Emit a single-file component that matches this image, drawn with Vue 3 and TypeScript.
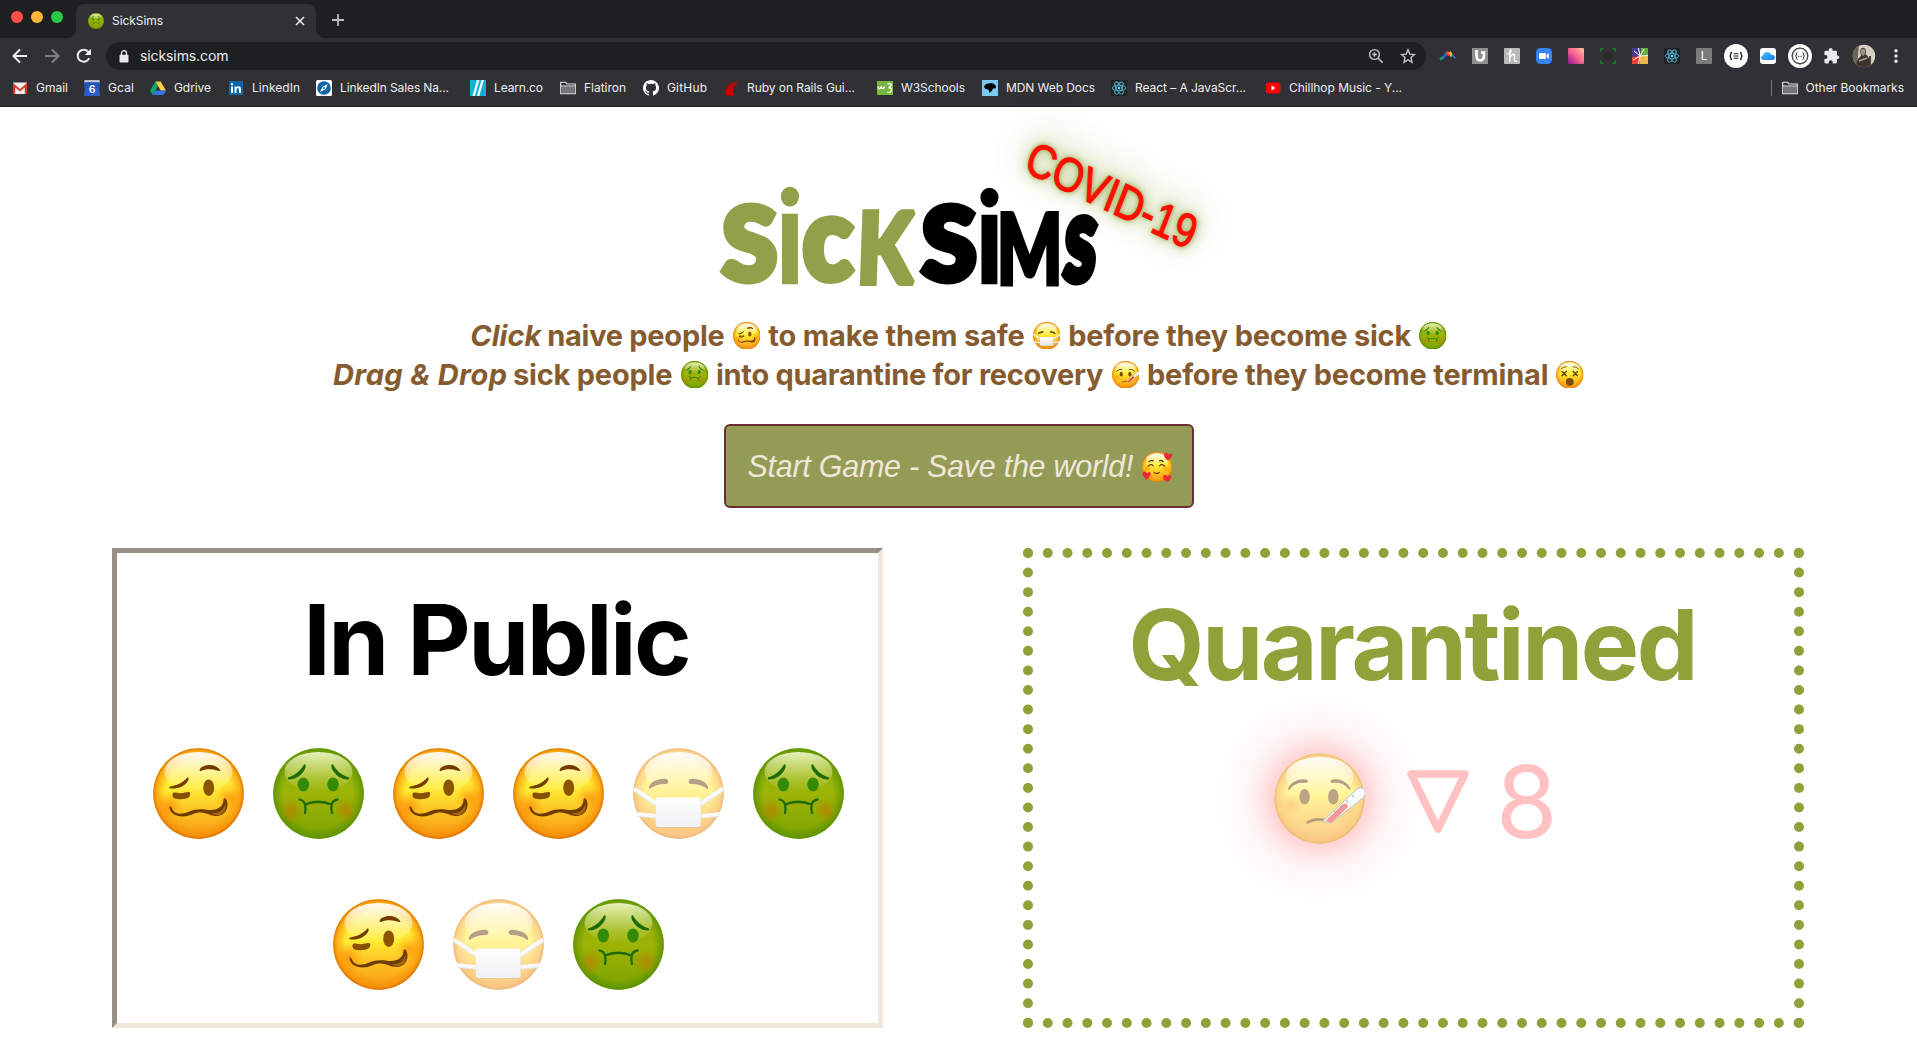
<script setup lang="ts">
import type { Directive } from 'vue'

type Face = 'woozy' | 'sick' | 'mask' | 'fever' | 'dizzy' | 'love'

// Tracks a line of text out (or in) until it is exactly `value` pixels wide.
const vFit: Directive<HTMLElement, number> = {
  mounted(el, { value }) {
    const count = (el.textContent ?? '').length
    const spacing = (value - el.getBoundingClientRect().width) / (count - 1)
    el.style.letterSpacing = `${spacing}px`
    el.style.marginRight = `${-spacing}px`
  },
}

const bookmarks = [
  { icon: 'gmail', label: 'Gmail', text: 32, width: 72 },
  { icon: 'gcal', label: 'Gcal', text: 26, width: 66 },
  { icon: 'gdrive', label: 'Gdrive', text: 37, width: 78 },
  { icon: 'linkedin', label: 'LinkedIn', text: 48, width: 88 },
  { icon: 'sales', label: 'LinkedIn Sales Na...', text: 109, width: 154 },
  { icon: 'learn', label: 'Learn.co', text: 49, width: 90 },
  { icon: 'folder', label: 'Flatiron', text: 42, width: 83 },
  { icon: 'github', label: 'GitHub', text: 40, width: 80 },
  { icon: 'rails', label: 'Ruby on Rails Gui...', text: 108, width: 154 },
  { icon: 'w3', label: 'W3Schools', text: 64, width: 105 },
  { icon: 'mdn', label: 'MDN Web Docs', text: 89, width: 129 },
  { icon: 'react', label: 'React – A JavaScr...', text: 111, width: 154 },
  { icon: 'youtube', label: 'Chillhop Music - Y...', text: 113, width: 140 },
]

const extensions = ['arc', 'ublock', 'honey', 'zoom', 'pixel', 'corners', 'burst', 'react', 'letter', 'json', 'cloud', 'swagger', 'puzzle', 'avatar', 'dots']

interface Part { text?: string; width?: number; em?: boolean; face?: Face }
const instructions: Part[][] = [
  [
    { text: 'Click', width: 71, em: true },
    { text: 'naive people', width: 177.5 },
    { face: 'woozy' },
    { text: 'to make them safe', width: 256.5 },
    { face: 'mask' },
    { text: 'before they become sick', width: 343 },
    { face: 'sick' },
  ],
  [
    { text: 'Drag & Drop', width: 174, em: true },
    { text: 'sick people', width: 159.5 },
    { face: 'sick' },
    { text: 'into quarantine for recovery', width: 387.5 },
    { face: 'fever' },
    { text: 'before they become terminal', width: 401.5 },
    { face: 'dizzy' },
  ],
]

const people: Face[] = ['woozy', 'sick', 'woozy', 'woozy', 'mask', 'sick', 'woozy', 'mask', 'sick']

// Wordmark letters: each one, outline included, is stretched to its own box.
const ctx = document.createElement('canvas').getContext('2d')!
const letters = [
  { ch: 'S', x: 719, y: 202.5, w: 58, h: 82, green: true, skew: 0, stroke: 7 },
  { ch: 'i', x: 779.5, y: 186, w: 19.5, h: 98, green: true, skew: 0, stroke: 2 },
  { ch: 'c', x: 802, y: 216, w: 53, h: 68.5, green: true, skew: 0, stroke: 7 },
  { ch: 'K', x: 859, y: 209, w: 56, h: 77, green: true, skew: -2, stroke: 6 },
  { ch: 'S', x: 918.5, y: 202.5, w: 58, h: 82, green: false, skew: 0, stroke: 7 },
  { ch: 'i', x: 979, y: 186.5, w: 19.5, h: 97.5, green: false, skew: 0, stroke: 2 },
  { ch: 'M', x: 999.5, y: 210.5, w: 59, h: 76, green: false, skew: 0, stroke: 5 },
  { ch: 's', x: 1060.5, y: 214.5, w: 34, h: 71.5, green: false, skew: -4, stroke: 6 },
].map((l) => {
  const font = l.ch === 'i' ? '600 100px Inter' : '900 100px Lato'
  ctx.font = font
  const m = ctx.measureText(l.ch)
  const half = l.stroke / 2
  const sx = l.w / (m.actualBoundingBoxLeft + m.actualBoundingBoxRight + l.stroke)
  const sy = l.h / (m.actualBoundingBoxAscent + m.actualBoundingBoxDescent + l.stroke)
  const tx = l.x + (m.actualBoundingBoxLeft + half) * sx
  const ty = l.y + (m.actualBoundingBoxAscent + half) * sy
  return { ...l, transform: `translate(${tx} ${ty}) skewX(${l.skew}) scale(${sx} ${sy})` }
})
</script>

<template>
  <div class="screen">
    <svg class="defs" width="0" height="0">
      <defs>
        <linearGradient id="gy" x1="0" y1="0" x2="0" y2="1">
          <stop offset="0" stop-color="#ffe53a" /><stop offset=".45" stop-color="#ffed35" /><stop offset=".72" stop-color="#fdbd21" /><stop offset="1" stop-color="#f59a12" />
        </linearGradient>
        <radialGradient id="rim" cx=".5" cy=".5" r=".5">
          <stop offset=".72" stop-color="#f79000" stop-opacity="0" /><stop offset=".93" stop-color="#f88a04" stop-opacity=".65" /><stop offset="1" stop-color="#d46a00" stop-opacity=".9" />
        </radialGradient>
        <linearGradient id="gg" x1="0" y1="0" x2="0" y2="1">
          <stop offset="0" stop-color="#8db010" /><stop offset=".5" stop-color="#9db306" /><stop offset="1" stop-color="#7ca400" />
        </linearGradient>
        <radialGradient id="rimg" cx=".5" cy=".5" r=".5">
          <stop offset=".76" stop-color="#5c9200" stop-opacity="0" /><stop offset="1" stop-color="#4f8c00" stop-opacity=".75" />
        </radialGradient>
        <linearGradient id="shine" x1="0" y1="0" x2="0" y2="1">
          <stop offset="0" stop-color="#fff" stop-opacity=".95" /><stop offset="1" stop-color="#fff" stop-opacity="0" />
        </linearGradient>
        <linearGradient id="shineg" x1="0" y1="0" x2="0" y2="1">
          <stop offset="0" stop-color="#f3fbd0" stop-opacity=".9" /><stop offset="1" stop-color="#dbe88a" stop-opacity="0" />
        </linearGradient>
        <radialGradient id="blush"><stop offset="0" stop-color="#ff7a00" stop-opacity=".6" /><stop offset="1" stop-color="#ff8a00" stop-opacity="0" /></radialGradient>
        <radialGradient id="blushg"><stop offset="0" stop-color="#c87400" stop-opacity=".65" /><stop offset="1" stop-color="#b88600" stop-opacity="0" /></radialGradient>
        <linearGradient id="pix" x1="1" y1="0" x2="0" y2="1"><stop offset="0" stop-color="#ffc39a" /><stop offset=".5" stop-color="#f7618f" /><stop offset="1" stop-color="#8a1592" /></linearGradient>
        <linearGradient id="cl" x1="0" y1="0" x2="1" y2="1"><stop offset="0" stop-color="#4cc4ff" /><stop offset="1" stop-color="#1578f0" /></linearGradient>
        <linearGradient id="maskg" x1="0" y1="0" x2="0" y2="1"><stop offset="0" stop-color="#fff" /><stop offset="1" stop-color="#e4e4ea" /></linearGradient>
      </defs>
      <symbol id="base" viewBox="0 0 91 91">
        <circle cx="45.5" cy="45.5" r="45.3" fill="url(#gy)" />
        <circle cx="45.5" cy="45.5" r="45.3" fill="url(#rim)" />
        <ellipse cx="45.5" cy="24" rx="34" ry="20" fill="url(#shine)" />
      </symbol>
      <symbol id="woozy" viewBox="0 0 91 91">
        <use href="#base" />
        <circle cx="77" cy="50" r="15" fill="url(#blush)" /><circle cx="16" cy="58" r="14" fill="url(#blush)" />
        <path d="M46.5 21.5C50 15.500 63 15 67.500 22.500C67 25 60 18.500 48.500 22.800Q46.500 23.500 46.500 21.500Z" fill="#733c00" />
        <path d="M16.500 38.800C25 37 30 34.500 34 30C36 28.500 36 31 35 33C31.500 38.500 25 41 18 40.500Q15.500 40.500 16.500 38.800Z" fill="#733c00" />
        <path d="M19.500 46C20 44 23 44.500 27 45.200C31 45.800 35 42.800 37.200 44.800C38 49.500 34 51 28 51.300C22 51.300 19 50 19.500 46Z" fill="#855000" />
        <ellipse cx="55.700" cy="39.700" rx="5.500" ry="8.300" fill="#8a5400" />
        <path d="M16.500 59C17 57 18.500 59 19.500 61.500C22 66.500 29 66.500 35 64C42 61 47 61 54 61.800C64 63 70 59 70.500 52C71 49 74 50 74.500 56C75 66 66 70 58 67.300C50 64 46 63.500 39 66.500C28 71 16.500 67 16.500 59Z" fill="#6f3c00" />
        <path d="M58 65Q69 66.500 72.500 56Q74 64 67 67Q62 68 58 65Z" fill="#a3670d" />
      </symbol>
      <symbol id="sick" viewBox="0 0 91 91">
        <circle cx="45.500" cy="45.500" r="45.300" fill="url(#gg)" /><circle cx="45.500" cy="45.500" r="45.300" fill="url(#rimg)" />
        <ellipse cx="45.500" cy="24" rx="34" ry="20" fill="url(#shineg)" />
        <circle cx="18" cy="63" r="13" fill="url(#blushg)" /><circle cx="72.700" cy="63" r="13" fill="url(#blushg)" />
        <path d="M15 29.500C23 27 28 22 31 16.500C33 15.500 33 18 32 21C28 28 23 31 16.500 31.500Q14 31.500 15 29.500Z" fill="#1f6a06" />
        <path d="M76 29.500C68 27 63 22 60 16.500C58 15.500 58 18 59 21C63 28 68 31 74.500 31.500Q77 31.500 76 29.500Z" fill="#1f6a06" />
        <ellipse cx="30.300" cy="36.500" rx="5.700" ry="7" fill="#348a06" /><ellipse cx="60" cy="36.500" rx="5.700" ry="7" fill="#348a06" />
        <path d="M32 56.500Q45 51 58.500 56.500M26.500 51.500Q31 52.500 32 56.500Q33 61 32 65M64.500 51.500Q59.500 52.500 58.700 56.500Q57.800 61 59 65" fill="none" stroke="#1f6a06" stroke-width="2.300" stroke-linecap="round" />
      </symbol>
      <symbol id="mask" viewBox="0 0 91 91">
        <use href="#base" />
        <path d="M16 40.500C14.500 34 28 29.500 33.500 31C37 33 35 36.500 32 36C26 36 21 38 18 40Q16.500 41.500 16 40.500ZM75 40.500C76.500 34 63 29.500 57.500 31C54 33 56 36.500 59 36C65 36 70 38 73 40Q74.500 41.500 75 40.500Z" fill="#6f4210" />
        <path d="M1 41L24 56.500M90 41L67 56.500M4 66.500L24 68.500M87 66.500L67 68.500" stroke="#cfcfd6" stroke-width="4.600" />
        <path d="M1 40.500L24 56M90 40.500L67 56M4 66L24 68M87 66L67 68" stroke="#f6f6f9" stroke-width="3.600" />
        <rect x="22.700" y="50" width="45.500" height="30" rx="3" fill="#a9884e" opacity=".55" />
        <rect x="22.700" y="49.500" width="45" height="29.500" rx="2.500" fill="url(#maskg)" />
      </symbol>
      <symbol id="fever" viewBox="0 0 91 91">
        <use href="#base" />
        <circle cx="17" cy="52" r="13" fill="url(#blush)" /><circle cx="73" cy="55" r="13" fill="url(#blush)" />
        <path d="M14 35.500C18 27 28 25 33.500 27Q35 30 31 29.800C24 29 20 31 15.500 36.500Q14 37.500 14 35.500ZM76.500 35.500C72.500 27 62.500 25 57 27Q55.500 30 59.500 29.800C66.500 29 70.500 31 75 36.500Q76.500 37.500 76.500 35.500Z" fill="#6b3c05" />
        <ellipse cx="30.600" cy="43.700" rx="5.200" ry="7.800" fill="#7b4a08" /><ellipse cx="59.300" cy="43.700" rx="5.200" ry="7.800" fill="#7b4a08" />
        <path d="M33.500 69.500Q41 65 50 67" fill="none" stroke="#6b3c05" stroke-width="2.600" stroke-linecap="round" />
        <path d="M49 68L83 36Q88 33 91 37Q93 41 89 45L57 70Z" fill="#f4f6fa" stroke="#75879b" stroke-width="1" />
        <path d="M51.500 68L69 51Q73 49 74 54L57.500 69.500Z" fill="#f2302e" />
        <path d="M60 58l1.500 2M66 53l1.500 2M72 47l2 2.500M78 42l2 2.500" stroke="#44525e" stroke-width="1" />
      </symbol>
      <symbol id="dizzy" viewBox="0 0 91 91">
        <use href="#base" />
        <path d="M17 26Q24 18 34 19M74 26Q67 18 57 19" fill="none" stroke="#7a4300" stroke-width="3" stroke-linecap="round" />
        <path d="M20 35l14 14M34 35l-14 14M57 35l14 14M71 35l-14 14" stroke="#6b3a00" stroke-width="4.500" stroke-linecap="round" />
        <ellipse cx="45.500" cy="69" rx="13" ry="13" fill="#7d4a10" />
      </symbol>
      <symbol id="love" viewBox="0 0 91 91">
        <use href="#base" />
        <circle cx="16" cy="50" r="13" fill="url(#blush)" /><circle cx="72" cy="50" r="13" fill="url(#blush)" />
        <path d="M21 30Q27 23 34 27M53 27Q59 24 64 29M19 43Q26 34 34 42M53 42Q61 34 68 43" fill="none" stroke="#6b3a00" stroke-width="4" stroke-linecap="round" />
        <path d="M34 59Q44 67 55 59Q53 67 44 67Q36 67 34 59Z" fill="#6b3a00" />
        <g fill="#ee2737">
          <path d="M79 26C66 18 64 6 71 3Q77 1 80 8Q85 1 90 5Q96 12 79 26Z" />
          <path d="M14 84C0 74-2 62 6 59Q12 58 14 65Q21 57 26 63Q29 72 14 84Z" />
          <path d="M77 91C63 85 61 73 68 70Q74 68 77 75Q82 68 88 72Q93 80 77 91Z" />
        </g>
      </symbol>
      <symbol id="i-folder" viewBox="0 0 16 16"><path d="M.7 13.800V2.200H5.600L7 4H15.300V13.800Z" fill="none" stroke="#e8eaed" stroke-width="1.100" /><path d="M1.500 6.500H14.500V13H1.500Z" fill="#757679" /><path d="M1 6H15" stroke="#e8eaed" /></symbol>
      <symbol id="i-react" viewBox="0 0 16 16"><rect width="16" height="16" rx="1" fill="#202326" /><g fill="none" stroke="#4fb4d0" stroke-width=".9"><ellipse cx="8" cy="8" rx="6.800" ry="2.700" /><ellipse cx="8" cy="8" rx="6.800" ry="2.700" transform="rotate(60 8 8)" /><ellipse cx="8" cy="8" rx="6.800" ry="2.700" transform="rotate(120 8 8)" /></g><circle cx="8" cy="8" r="1.300" fill="#61dafb" /></symbol>
      <symbol id="i-gmail" viewBox="0 0 16 16"><rect x="1" y="2.500" width="14" height="11.500" rx="1" fill="#f2efee" /><path d="M1 14V3L8 9 15 3V14H12.800V7.500L8 11.500 3.200 7.500V14Z" fill="#e0352b" /></symbol>
      <symbol id="i-gcal" viewBox="0 0 16 16"><path d="M0 1.500Q0 0 1.500 0H14.500Q16 0 16 1.500V4H0Z" fill="#b8c0cc" /><path d="M0 2.500H16L15.200 8 16 16H0L.8 8Z" fill="#2a5ccc" /><path d="M0 2.500H16L15.200 8H.8Z" fill="#2350b4" /></symbol>
      <symbol id="i-gdrive" viewBox="0 0 16 16"><path d="M5.400 1.500H10.600L16 10.500H10.700Z" fill="#ffcf48" /><path d="M5.400 1.500L8 6 2.700 15 0 10.500Z" fill="#11a861" /><path d="M5.400 10.500H16L13.300 15H2.700Z" fill="#3777e3" /></symbol>
      <symbol id="i-linkedin" viewBox="0 0 16 16"><rect x="1" y="1" width="14" height="14" fill="#0a66a8" /><path d="M3 6.500H5V13H3ZM3 3.200H5V5.200H3ZM6.500 6.500H8.400V7.400Q9.200 6.300 10.600 6.300 13 6.300 13 9.200V13H11V9.600Q11 8 9.900 8 8.500 8 8.500 9.700V13H6.500Z" fill="#fff" /></symbol>
      <symbol id="i-sales" viewBox="0 0 16 16"><rect width="16" height="16" rx="1.500" fill="#fff" /><circle cx="8" cy="8" r="6.800" fill="#0c66a8" /><path d="M11.800 4L9.500 9.200 4 12 6.600 6.700Z" fill="#fff" /><circle cx="8" cy="8" r="1" fill="#0c66a8" /></symbol>
      <symbol id="i-learn" viewBox="0 0 16 16"><rect width="16" height="16" fill="#11b1d5" /><path d="M7 0H9.300L4.800 16H2.500ZM11.500 0H13.800L9.300 16H7Z" fill="#fff" /></symbol>
      <symbol id="i-github" viewBox="0 0 16 16"><path d="M8 0C3.580 0 0 3.580 0 8c0 3.540 2.290 6.530 5.470 7.590.4.070.55-.17.55-.38v-1.490c-2.010.37-2.530-.49-2.690-.94-.09-.23-.48-.94-.82-1.130-.28-.15-.68-.52-.01-.53.63-.01 1.080.58 1.230.82.720 1.210 1.870.87 2.330.66.070-.52.280-.87.510-1.070-1.780-.2-3.640-.89-3.640-3.950 0-.87.310-1.590.82-2.150-.08-.2-.36-1.020.08-2.120 0 0 .67-.21 2.200.82a7.600 7.600 0 0 1 4 0c1.530-1.040 2.200-.82 2.200-.82.440 1.100.160 1.920.080 2.120.510.560.820 1.270.820 2.150 0 3.070-1.870 3.750-3.650 3.950.290.250.540.730.540 1.480v2.190c0 .210.150.460.550.380A8 8 0 0 0 8 0Z" fill="#fff" /></symbol>
      <symbol id="i-rails" viewBox="0 0 16 16"><path d="M2.500 15.500Q2 9 6 5.500Q10 1.800 15.500 2.800Q12 4 10.800 7Q9 11 11 15.500Z" fill="#c00" /><path d="M5.500 4L4.500 3M9 2.300L8.500 1M3.200 7L1.800 6.500M2.200 10.500L.8 10.300M13 1.500V.5" stroke="#c00" /></symbol>
      <symbol id="i-w3" viewBox="0 0 16 16"><rect y="1" width="16" height="14" fill="#76b83f" /><path d="M1 6.500Q2 10.500 3.800 7.500L4.300 7Q5.300 10.500 8 6.500" fill="none" stroke="#fff" stroke-width="1.400" /><path d="M10.500 4Q14.500 2.800 14 5.500Q13.500 7.300 11.500 7.500Q15 8.200 14.300 10.500Q13.300 13.500 10.500 12" fill="none" stroke="#fff" stroke-width="1.400" /></symbol>
      <symbol id="i-mdn" viewBox="0 0 16 16"><rect width="16" height="16" fill="#7ccaf2" /><path d="M2 7Q3 3 7 3.500Q11 2 14 6L13.500 8.500H11Q10 12 7.500 13L6.500 9.500 3.500 9Z" fill="#000" /></symbol>
      <symbol id="i-youtube" viewBox="0 0 16 16"><rect x=".5" y="2.500" width="15" height="11" rx="3" fill="#f00" /><path d="M6.500 5.500L10.500 8 6.500 10.500Z" fill="#fff" /></symbol>
      <symbol id="x-arc" viewBox="0 0 24 24"><path d="M4 15.500L7.500 13.200" stroke="#27a567" stroke-width="2.600" fill="none" /><path d="M6.800 13.800L11 9" stroke="#2d5dc8" stroke-width="2.800" fill="none" /><path d="M10.500 8L13.500 11" stroke="#e84436" stroke-width="3.200" fill="none" /><path d="M13.500 8L16 12.200" stroke="#f4b42d" stroke-width="3" fill="none" /><path d="M16.200 11L19.500 14.500" stroke="#2d6fd8" stroke-width="1.800" fill="none" /></symbol>
      <symbol id="x-ublock" viewBox="0 0 24 24"><rect x="4" y="4" width="16" height="16" fill="#8f8f90" /><path d="M8.500 6V12.500Q9 16.500 12.500 16.500Q16 16 16 12V8.500H13" stroke="#fff" stroke-width="2.600" fill="none" /></symbol>
      <symbol id="x-honey" viewBox="0 0 24 24"><rect x="4" y="4" width="16" height="16" rx="1" fill="#b9b9ba" /><path d="M7.500 10Q11.500 8.500 11 6Q10 5 9.800 9V18M10 13Q13 9 14.500 11V16.500Q15 18 17 17" stroke="#fff" stroke-width="1.400" fill="none" /></symbol>
      <symbol id="x-zoom" viewBox="0 0 24 24"><rect x="4" y="4" width="16" height="16" rx="4.500" fill="#3585f7" /><rect x="7" y="9" width="7" height="6" rx="1" fill="#fff" /><path d="M14.500 11.200L17 9.200V14.800L14.500 12.800Z" fill="#fff" /></symbol>
      <symbol id="x-pixel" viewBox="0 0 24 24"><rect x="4" y="4" width="16" height="16" rx="1" fill="url(#pix)" /></symbol>
      <symbol id="x-corners" viewBox="0 0 24 24"><path d="M4 4H8L4 8ZM20 4V8L16 4ZM4 20V16L8 20ZM20 20H16L20 16Z" fill="#1d7d2c" /><rect x="8" y="8" width="8" height="8" fill="#29292b" /></symbol>
      <symbol id="x-burst" viewBox="0 0 24 24"><path d="M4 4H13L12 12 4 14Z" fill="#493a93" /><path d="M13 4H20V12H12Z" fill="#65aa3e" /><path d="M4 13L12 12V20H4Z" fill="#ec4033" /><path d="M12 12H20V20H12Z" fill="#efb74c" /><path d="M12 12L6 7M12 12L10.500 4M12 12L16 5M12 12L20 11.500M12 12L10.500 20M12 12L5 16" stroke="#fff" stroke-width="1" /></symbol>
      <symbol id="x-react" viewBox="0 0 24 24"><use href="#i-react" x="4" y="4" width="16" height="16" /></symbol>
      <symbol id="x-letter" viewBox="0 0 24 24"><rect x="4" y="4" width="16" height="16" rx="1" fill="#7b7b7c" /></symbol>
      <symbol id="x-json" viewBox="0 0 24 24"><circle cx="12" cy="12" r="12" fill="#fff" /><path d="M8 8.500Q6.700 8.500 6.700 10Q6.700 12 5.500 12Q6.700 12 6.700 14Q6.700 15.500 8 15.500M16 8.500Q17.300 8.500 17.300 10Q17.300 12 18.500 12Q17.300 12 17.300 14Q17.300 15.500 16 15.500" fill="none" stroke="#222" stroke-width="1.400" /><path d="M9.500 9.800H14.500M9.500 12H14.500M9.500 14.200H14.500" stroke="#222" stroke-width="1.100" /></symbol>
      <symbol id="x-cloud" viewBox="0 0 24 24"><rect x="4" y="4" width="16" height="16" rx="3" fill="#fff" /><path d="M7.500 16Q5 15.800 5 13.500Q5.300 11.500 7 11.300Q8 8 11.500 8Q14.500 8 15.300 10.500Q19 11 19 13.500Q18.700 16 16.500 16Z" fill="url(#cl)" /></symbol>
      <symbol id="x-swagger" viewBox="0 0 24 24"><circle cx="12" cy="12" r="12" fill="#fff" /><circle cx="12" cy="12" r="7.800" fill="none" stroke="#444" stroke-width="1.300" /><path d="M9.500 8.500Q8.500 8.500 8.500 10Q8.500 12 7.500 12Q8.500 12 8.500 14Q8.500 15.500 9.500 15.500M14.500 8.500Q15.500 8.500 15.500 10Q15.500 12 16.500 12Q15.500 12 15.500 14Q15.500 15.500 14.500 15.500" fill="none" stroke="#333" stroke-width="1" /><path d="M10 12.300H14" stroke="#333" stroke-width="1" stroke-dasharray="1 .6" /></symbol>
      <symbol id="x-puzzle" viewBox="0 0 24 24"><path d="M18 11.500h-1V8.200c0-.8-.6-1.400-1.400-1.400h-3v-1a1.900 1.900 0 0 0-3.800 0v1h-3c-.8 0-1.400.6-1.400 1.400v2.900h1.100a2 2 0 0 1 0 4H4.400v2.900c0 .8.600 1.400 1.400 1.400h2.900v-1.100a2 2 0 0 1 4 0v1.100h2.900c.8 0 1.400-.6 1.400-1.400v-2.900h1a1.900 1.900 0 0 0 0-3.600Z" fill="#e8eaed" /></symbol>
      <symbol id="x-avatar" viewBox="0 0 24 24"><clipPath id="av"><circle cx="12" cy="12" r="11.200" /></clipPath><g clip-path="url(#av)"><rect width="24" height="24" fill="#d6cfc5" /><path d="M0 0H7L5 24H0Z" fill="#6c6357" /><path d="M4 24Q4 15 9 12L8 7Q9 3 12 4Q15 5 13.500 10Q18 13 19 24Z" fill="#3a342c" /><path d="M8.500 6Q12 3 13.500 7L12 12Q8 11 8.500 6Z" fill="#9c9184" /><path d="M18 12V21" stroke="#463e33" stroke-width="2" /><path d="M7 17L15 14" stroke="#a99c8b" stroke-width="1.800" /></g></symbol>
      <symbol id="x-dots" viewBox="0 0 24 24"><circle cx="12" cy="6.800" r="1.700" fill="#e8eaed" /><circle cx="12" cy="12" r="1.700" fill="#e8eaed" /><circle cx="12" cy="17.200" r="1.700" fill="#e8eaed" /></symbol>
    </svg>

    <header class="browser">
      <div class="tabs">
        <i class="light red" /><i class="light amber" /><i class="light green" />
        <div class="tab">
          <svg class="favicon"><use href="#sick" /></svg>
          <span v-fit="51" class="tab-title">SickSims</span>
          <svg class="close" viewBox="0 0 10 10"><path d="M1 1L9 9M9 1L1 9" stroke="#e8eaed" stroke-width="1.600" /></svg>
        </div>
        <svg class="plus" viewBox="0 0 12 12"><path d="M6 0V12M0 6H12" stroke="#b9bbc1" stroke-width="1.800" /></svg>
      </div>
      <div class="toolbar">
        <svg class="nav" viewBox="0 0 16 16"><path d="M15 8H2M8 1.500L1.500 8 8 14.500" fill="none" stroke="#eceef1" stroke-width="2" /></svg>
        <svg class="nav" viewBox="0 0 16 16"><path d="M1 8H14M8 1.500L14.500 8 8 14.500" fill="none" stroke="#808185" stroke-width="2" /></svg>
        <svg class="nav" viewBox="0 0 16 16"><path d="M13.200 10.200A6 6 0 1 1 12.300 3.800L14 5.600" fill="none" stroke="#eceef1" stroke-width="2" /><path d="M15 .8V7H8.800Z" fill="#eceef1" /></svg>
        <div class="omnibox">
          <svg class="lock" viewBox="0 0 10 13"><rect x=".5" y="4.800" width="9" height="7.700" rx="1" fill="#e8eaed" /><path d="M2.500 5V3.200a2.500 2.500 0 0 1 5 0V5" fill="none" stroke="#e8eaed" stroke-width="1.300" /></svg>
          <span v-fit="88.5" class="url">sicksims.com</span>
          <svg class="omni-icon" viewBox="0 0 16 16"><circle cx="6.500" cy="6.500" r="4.900" fill="none" stroke="#c3c5c9" stroke-width="1.400" /><path d="M10.200 10.200L14.600 14.600M6.500 4.200V8.800M4.200 6.500H8.800" stroke="#c3c5c9" stroke-width="1.500" /></svg>
          <svg class="omni-icon" viewBox="0 0 16 16"><path d="M8 1.800L9.800 6.100 14.500 6.500 11 9.600 12 14.200 8 11.800 4 14.200 5 9.600 1.500 6.500 6.200 6.100Z" fill="none" stroke="#c3c5c9" stroke-width="1.400" /></svg>
        </div>
        <svg v-for="name in extensions" :key="name" class="ext">
          <use :href="`#x-${name}`" />
          <text v-if="name === 'letter'" x="12" y="16" class="ext-letter">L</text>
        </svg>
      </div>
      <div class="bookmarks">
        <div v-for="b in bookmarks" :key="b.label" class="bookmark" :style="{ width: `${b.width}px` }">
          <svg class="fav">
            <use :href="`#i-${b.icon}`" />
            <text v-if="b.icon === 'gcal'" x="8" y="12.700" class="day">6</text>
          </svg>
          <span v-fit="b.text" class="label">{{ b.label }}</span>
        </div>
        <div class="others">
          <svg class="fav"><use href="#i-folder" /></svg>
          <span v-fit="98.5" class="label">Other Bookmarks</span>
        </div>
      </div>
    </header>

    <main class="game">
      <div class="logo">
        <svg viewBox="688.5 107 540 209" width="540" height="209">
          <text v-for="(l, i) in letters" :key="i" class="letter" :class="{ green: l.green, dotted: l.ch === 'i' }" :stroke-width="l.stroke" :transform="l.transform">{{ l.ch }}</text>
        </svg>
        <span class="covid">COVID-19</span>
      </div>

      <div class="instructions">
        <p v-for="(line, i) in instructions" :key="i">
          <template v-for="(part, j) in line" :key="j">
            <svg v-if="part.face" class="inline-face"><use :href="`#${part.face}`" /></svg>
            <span v-else v-fit="part.width!" :class="{ em: part.em }">{{ part.text }}</span>
          </template>
        </p>
      </div>

      <button class="start" type="button">
        <span v-fit="386">Start Game - Save the world!</span>
        <svg class="love"><use href="#love" /></svg>
      </button>

      <div class="zones">
        <section class="zone public">
          <h1><span v-fit="388.5">In Public</span></h1>
          <div class="people">
            <svg v-for="(face, i) in people" :key="i" class="face" :class="{ safe: face === 'mask' }"><use :href="`#${face}`" /></svg>
          </div>
        </section>
        <section class="zone quarantine">
          <h1><span v-fit="570">Quarantined</span></h1>
          <div class="patient">
            <div class="glow"><svg class="face"><use href="#fever" /></svg></div>
            <svg class="nabla" viewBox="0 0 62 63"><path d="M4 4H58L31 59Z" fill="none" stroke="#ff8484" stroke-width="7.500" stroke-linejoin="round" /></svg>
            <span class="count">8</span>
          </div>
        </section>
      </div>
    </main>
  </div>
</template>

<style>
body { background: #fff; overflow: hidden; }
</style>

<style scoped>
.screen { width: 1917px; height: 1052px; overflow: hidden; font-family: Inter, "Liberation Sans", sans-serif; }
.defs { position: absolute; }
svg { flex: none; display: block; }
span { flex: none; white-space: nowrap; }

.browser { height: 107px; box-sizing: border-box; background: #303035; border-bottom: 1px solid #1f1f22; color: #eeeff1; }
.tabs { display: flex; align-items: center; height: 38px; box-sizing: border-box; padding: 0 0 4px 11px; background: #1e1f21; }
.light { width: 12px; height: 12px; margin-right: 8px; border-radius: 50%; }
.red { background: #ff4f48; }
.amber { background: #ffb43a; }
.light.green { background: #2ac748; }
.tab { position: relative; display: flex; align-items: center; align-self: flex-end; width: 240px; height: 34px; margin: 0 16px -4px 5px; box-sizing: border-box; padding: 0 11px 0 12px; border-radius: 8px 8px 0 0; background: #303035; }
.tab::before, .tab::after { content: ""; position: absolute; bottom: 0; width: 8px; height: 8px; }
.tab::before { left: -8px; background: radial-gradient(circle at 0 0, transparent 7.5px, #303035 8px); }
.tab::after { right: -8px; background: radial-gradient(circle at 100% 0, transparent 7.5px, #303035 8px); }
.favicon { width: 16px; height: 16px; margin-right: 8px; }
.tab-title { font-size: 12px; padding-bottom: 2px; }
.close { width: 10px; height: 10px; margin-left: auto; }
.plus { width: 12px; height: 12px; margin-top: 6px; }

.toolbar { display: flex; align-items: center; height: 36px; padding-left: 12px; }
.nav { width: 16px; height: 16px; margin-right: 16px; }
.nav:nth-child(3) { margin-right: 14px; }
.omnibox { display: flex; align-items: center; width: 1320px; height: 28px; margin-right: 10px; box-sizing: border-box; padding: 0 10px 0 13px; border-radius: 14px; background: #1e1f21; }
.lock { width: 10px; height: 13px; margin-right: 11px; }
.url { font-size: 14px; padding-bottom: 2px; }
.omni-icon { width: 16px; height: 16px; margin-left: 16px; }
.url + .omni-icon { margin-left: auto; }
.ext { width: 24px; height: 24px; margin-right: 8px; }
.ext-letter { font-size: 11.500px; text-anchor: middle; fill: #fff; }

.bookmarks { display: flex; align-items: center; height: 28px; padding-left: 12px; font-size: 12px; }
.bookmark { display: flex; align-items: center; flex: none; }
.fav { width: 16px; height: 16px; margin-right: 8px; }
.label { padding-bottom: 2px; }
.day { font-size: 10.500px; font-weight: 600; text-anchor: middle; fill: #fff; }
.others { display: flex; align-items: center; height: 16px; margin-left: auto; padding: 0 13px 0 10px; border-left: 1px solid #74757a; }

.game { display: flex; flex-direction: column; align-items: center; background: #fff; }
.logo { position: relative; width: 540px; height: 209px; }
.letter { font: 900 100px Lato, sans-serif; fill: #000; stroke: #000; stroke-linejoin: miter; stroke-miterlimit: 2; }
.letter.dotted { font: 600 100px Inter, sans-serif; }
.letter.green { fill: #91a149; stroke: #91a149; }
.covid { position: absolute; left: 423.500px; top: 87.500px; transform: translate(-50%, -50%) rotate(25.500deg) skewX(4deg) scaleY(1.180); font: 40px/46px "Liberation Sans", Arial, sans-serif; color: #ff0d00; -webkit-text-stroke: 1px #ff0d00; text-shadow: 0 0 5px #7d9628, 0 0 12px rgba(143, 162, 58, .9), -4px -6px 34px rgba(143, 162, 58, .8); }

.instructions { color: #855b2f; font-size: 29px; font-weight: 700; }
.instructions p { display: flex; align-items: center; justify-content: center; gap: 8px; height: 39px; margin: 0; line-height: 39px; }
.em { font-style: italic; }
.em + span { margin-left: -2px; }
.inline-face { width: 27.500px; height: 27.500px; }

.start { display: flex; align-items: center; width: 470px; height: 84px; margin-top: 30px; padding: 1px 20px 0 22px; box-sizing: border-box; border: 2px solid #6b2f2f; border-radius: 6px; background: #949b56; color: #f0e7da; font: italic 30.500px "Liberation Sans", Arial, sans-serif; justify-content: space-between; }
.love { width: 30px; height: 30px; }

.zones { display: flex; gap: 140px; align-self: flex-start; margin: 40px 0 0 112px; }
.zone { height: 480px; box-sizing: border-box; padding-top: 27px; }
.public { width: 771px; border: 5px solid; border-color: #988f86 #f0e7da #f0e7da #988f86; color: #000; }
.quarantine { width: 781px; border: 10px dotted #8fa23a; color: #8fa23a; }
h1 { display: flex; justify-content: center; height: 120px; margin: 0 0 47.500px; font-size: 98px; line-height: 120px; font-weight: 700; }
.people { display: flex; flex-wrap: wrap; justify-content: center; gap: 60px 29px; padding-left: 1.500px; }
.face { width: 91px; height: 91px; }
.safe { opacity: .5; }
.patient { display: flex; align-items: center; justify-content: center; height: 91px; padding-left: 4.500px; opacity: .5; }
.glow { border-radius: 50%; box-shadow: 0 0 30px 3px rgba(255, 20, 20, .45), 0 0 60px 6px rgba(255, 30, 30, .4); }
.nabla { width: 62px; height: 63px; margin: 6px 27px 0 42px; }
.count { color: #ff8484; font-size: 100px; line-height: 91px; margin-top: 6px; }
</style>
